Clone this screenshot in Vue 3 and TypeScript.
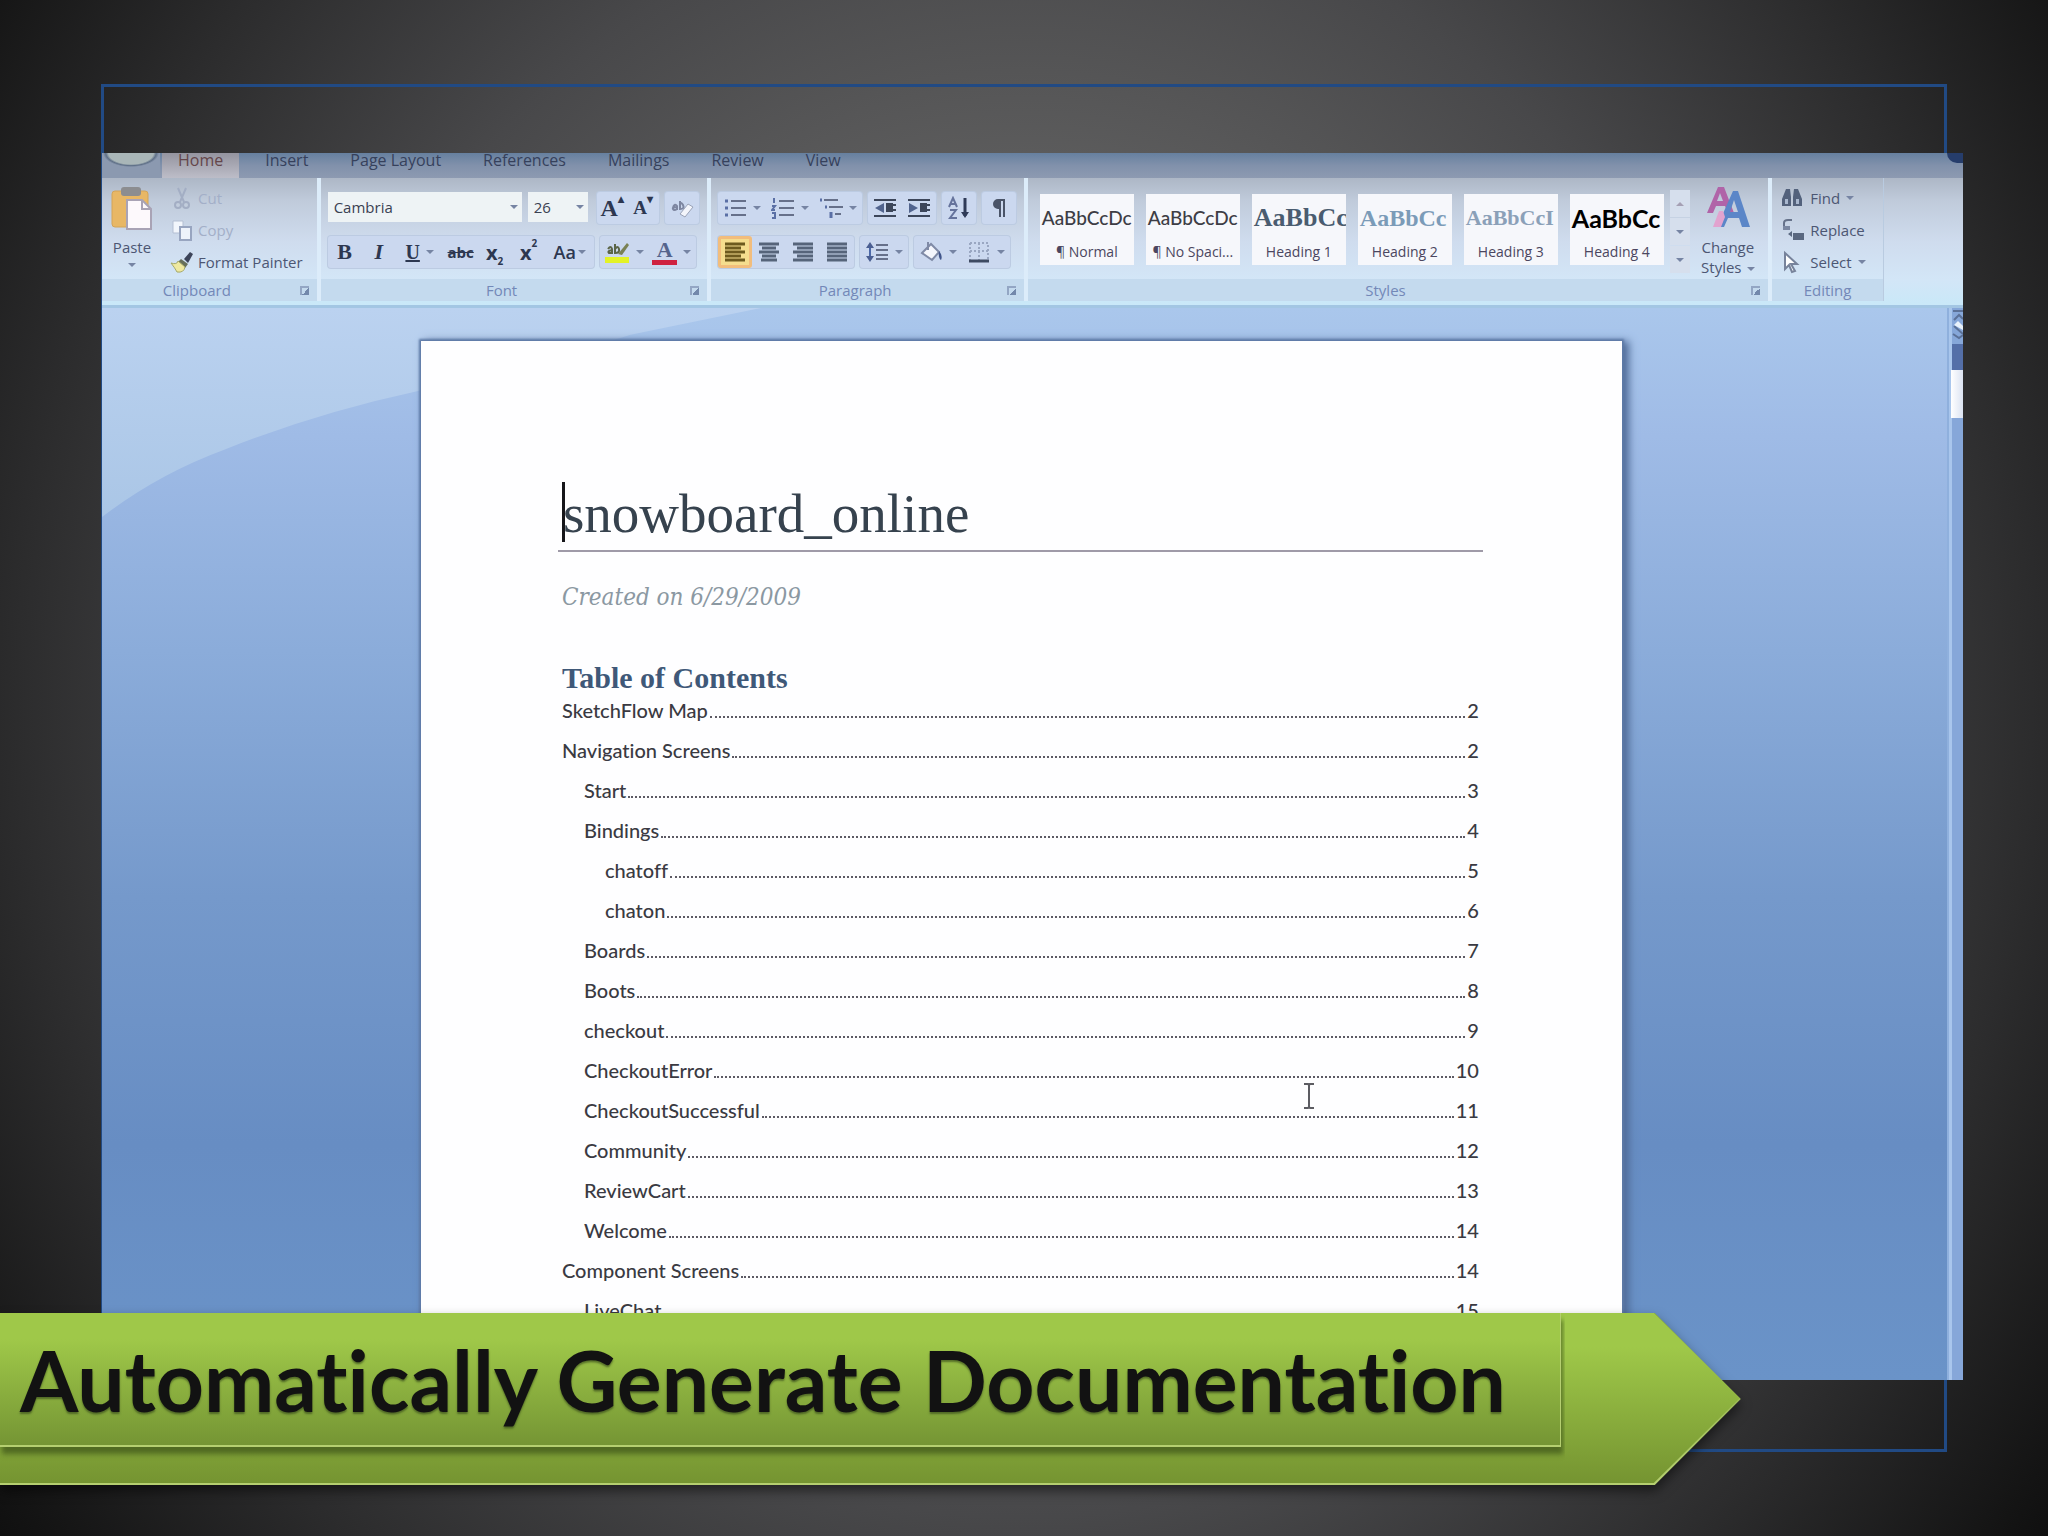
<script setup lang="ts">
interface TocEntry {
  title: string
  page: number
  level: 0 | 1 | 2
}

interface StyleTile {
  sample: string
  name: string
  look: string
}

interface Tool {
  label: string
  icon?: string
  glyph?: string
  look?: string
  menu?: boolean
  wide?: boolean
  active?: boolean
}

const tabs: string[] = ['Home', 'Insert', 'Page Layout', 'References', 'Mailings', 'Review', 'View']

const toc: TocEntry[] = [
  { title: 'SketchFlow Map', page: 2, level: 0 },
  { title: 'Navigation Screens', page: 2, level: 0 },
  { title: 'Start', page: 3, level: 1 },
  { title: 'Bindings', page: 4, level: 1 },
  { title: 'chatoff', page: 5, level: 2 },
  { title: 'chaton', page: 6, level: 2 },
  { title: 'Boards', page: 7, level: 1 },
  { title: 'Boots', page: 8, level: 1 },
  { title: 'checkout', page: 9, level: 1 },
  { title: 'CheckoutError', page: 10, level: 1 },
  { title: 'CheckoutSuccessful', page: 11, level: 1 },
  { title: 'Community', page: 12, level: 1 },
  { title: 'ReviewCart', page: 13, level: 1 },
  { title: 'Welcome', page: 14, level: 1 },
  { title: 'Component Screens', page: 14, level: 0 },
  { title: 'LiveChat', page: 15, level: 1 },
]

const tiles: StyleTile[] = [
  { sample: 'AaBbCcDc', name: '¶ Normal', look: 'plain' },
  { sample: 'AaBbCcDc', name: '¶ No Spaci...', look: 'plain' },
  { sample: 'AaBbCc', name: 'Heading 1', look: 'h-one' },
  { sample: 'AaBbCc', name: 'Heading 2', look: 'h-two' },
  { sample: 'AaBbCcI', name: 'Heading 3', look: 'h-three' },
  { sample: 'AaBbCc', name: 'Heading 4', look: 'h-four' },
]

const icons: Record<string, string> = {
  eraser:
    '<path d="M3 11q2-4 4-1v4M7 11q-5 0-4 2t4 0M10 5v8q5 0 3-4t-3 0" stroke="#7d86a0" stroke-width="2" fill="none"/><path d="M10 18l8-10 5 3-8 10z" fill="#f3f5fb" stroke="#9aa3b8"/>',
  bullets:
    '<path d="M8 5h15M8 12h15M8 19h15" stroke="#66708a" stroke-width="2"/><path d="M2 5h3M2 12h3M2 19h3" stroke="#5a6fa5" stroke-width="3"/>',
  numbers:
    '<path d="M8 5h15M8 12h15M8 19h15" stroke="#66708a" stroke-width="2"/><path d="M3 2v5M1 10h3l-3 4h3M1 17h3v5H1" stroke="#5a6fa5" stroke-width="2" fill="none"/>',
  multilevel:
    '<path d="M5 4h14M10 11h14M16 18h6" stroke="#66708a" stroke-width="2"/><path d="M1 4h2M6 11h2M12 16v6" stroke="#5a6fa5" stroke-width="3"/>',
  outdent:
    '<path d="M1 4h22M13 9h10M13 14h10M1 20h22" stroke="#3c465a" stroke-width="2"/><path d="M11 7v10l-9-5z" fill="#51648e"/><path d="M13 7h7v9h-7z" fill="#3c465a"/>',
  indent:
    '<path d="M1 4h22M13 9h10M13 14h10M1 20h22" stroke="#3c465a" stroke-width="2"/><path d="M2 7v10l9-5z" fill="#51648e"/><path d="M13 7h7v9h-7z" fill="#3c465a"/>',
  sort:
    '<path d="M2 11l4-9 4 9M3 8h6M3 14h6l-6 8h7" stroke="#65739c" stroke-width="2" fill="none"/><path d="M18 2v18" stroke="#2f3b58" stroke-width="3"/><path d="M14 16h8l-4 6z" fill="#2f3b58"/>',
  pilcrow: '<path d="M18 3H11a5 5 0 0 0 0 10h1v8h2V5h2v16h2z" fill="#4a5468"/>',
  left: '<path d="M2 4h20M2 8h16M2 12h20M2 16h16M2 20h20" stroke="#6d5a1e" stroke-width="3"/>',
  center: '<path d="M2 4h20M5 8h14M2 12h20M5 16h14M4 20h16" stroke="#56647a" stroke-width="3"/>',
  right: '<path d="M2 4h20M6 8h16M2 12h20M6 16h16M2 20h20" stroke="#56647a" stroke-width="3"/>',
  justify: '<path d="M2 4h20M2 8h20M2 12h20M2 16h20M2 20h20" stroke="#56647a" stroke-width="3"/>',
  spacing:
    '<path d="M11 5h12M11 10h12M11 15h12M11 19h12" stroke="#66708a" stroke-width="2"/><path d="M5 6v12" stroke="#4b68a8" stroke-width="2"/><path d="M1 8l4-6 4 6zM1 16l4 6 4-6z" fill="#4b5f92"/>',
  bucket:
    '<path d="M3 13l9-9 8 8-7 8z" fill="#f4f6fc" stroke="#7f8aa6" stroke-width="2"/><path d="M9 2v8" stroke="#7f8aa6" stroke-width="2"/><path d="M20 11q4 5 2 9-3-2-2-9z" fill="#41558a"/>',
  borders:
    '<path d="M3 3h18v17M3 3v17M12 3v17M3 11h18" stroke="#9aa7c2" stroke-width="2" stroke-dasharray="2 2" fill="none"/><path d="M2 21h20" stroke="#3e4a62" stroke-width="3"/>',
  highlight:
    '<path d="M3 9q3-4 4 0v4H4q-2-2 3-3M10 4v9q5 0 4-4t-4 0" stroke="#5b6548" stroke-width="2" fill="none"/><path d="M13 14l9-11 2 2-7 10z" fill="#7a8154"/><path d="M0 17h24v6H0z" fill="#e3f227"/>',
  cut: '<path d="M8 2l6 14M16 2l-6 14" stroke="#a3aec4" stroke-width="2"/><circle cx="8" cy="19" r="3" fill="none" stroke="#a3aec4" stroke-width="2"/><circle cx="16" cy="19" r="3" fill="none" stroke="#a3aec4" stroke-width="2"/>',
  copy: '<path d="M3 3h10v12H3z" fill="#f2f6fc" stroke="#b4bfd3"/><path d="M10 9h11v13H10z" fill="#eef3fb" stroke="#98a5c0" stroke-width="2"/>',
  brush:
    '<path d="M14 9l6-7 3 2-5 9z" fill="#3c4459"/><path d="M11 9l7 5-3 4-8-5z" fill="#67705a"/><path d="M1 13q6 2 7-2l7 6q-1 6-8 5-2-4-6-9z" fill="#efe9a0" stroke="#a5a96a"/>',
  find: '<path d="M6 3h4l1 8v9H2v-7zM14 3h4l4 10v7h-9v-9z" fill="#53627c"/><path d="M5 13h3v5H5zM16 13h3v5h-3z" fill="#a9b8cf"/>',
  replace:
    '<path d="M4 12V5q0-3 4-3h4" stroke="#66728a" stroke-width="2" fill="none"/><path d="M3 8h7v4H3z" fill="#7b88a2"/><path d="M8 16l4-3v6zM13 15h11v7H13z" fill="#5a6880"/>',
  select: '<path d="M5 3l12 11h-6l4 7-3 1-3-7-4 4z" fill="#fff" stroke="#77839b" stroke-width="2"/>',
}

const fontTools: Tool[] = [
  { label: 'Bold', glyph: 'B', look: 'bold' },
  { label: 'Italic', glyph: 'I', look: 'italic' },
  { label: 'Underline', glyph: 'U', look: 'under', menu: true, wide: true },
  { label: 'Strikethrough', glyph: 'abc', look: 'strike' },
]

const listTools: Tool[] = [
  { label: 'Bullets', icon: 'bullets', menu: true, wide: true },
  { label: 'Numbering', icon: 'numbers', menu: true, wide: true },
  { label: 'Multilevel list', icon: 'multilevel', menu: true, wide: true },
]
const alignTools: Tool[] = [
  { label: 'Align left', icon: 'left', active: true },
  { label: 'Center', icon: 'center' },
  { label: 'Align right', icon: 'right' },
  { label: 'Justify', icon: 'justify' },
]
const shadeTools: Tool[] = [
  { label: 'Shading', icon: 'bucket', menu: true, wide: true },
  { label: 'Borders', icon: 'borders', menu: true, wide: true },
]
</script>

<template>
  <main class="slide">
    <div class="frame" aria-hidden="true"></div>

    <section class="photo" aria-label="Word processor">
      <nav class="tabs">
        <span class="orb" aria-hidden="true"></span>
        <a v-for="(tab, i) in tabs" :key="tab" href="#" :class="['tab', { current: i === 0 }]">{{ tab }}</a>
        <span class="help" aria-hidden="true"></span>
      </nav>

      <div class="ribbon">
        <section class="group clipboard">
          <div class="body">
            <button class="big">
              <svg width="44" height="46" viewBox="0 0 44 46" aria-hidden="true">
                <rect x="2" y="6" width="36" height="36" rx="3" fill="#e8b765" stroke="#d3a458" />
                <rect x="11" y="2" width="20" height="9" rx="3" fill="#8c8d90" />
                <path d="M17 15h15l9 9v20H17z" fill="#fdf9fc" stroke="#a9a3b5" stroke-width="2" />
                <path d="M32 15v9h9" fill="none" stroke="#a9a3b5" stroke-width="2" />
              </svg>
              <span>Paste</span>
              <i class="arrow"></i>
            </button>
            <div class="stack">
              <button class="line faded"><svg class="ico" viewBox="0 0 24 24" v-html="icons.cut" />Cut</button>
              <button class="line faded"><svg class="ico" viewBox="0 0 24 24" v-html="icons.copy" />Copy</button>
              <button class="line"><svg class="ico" viewBox="0 0 24 24" v-html="icons.brush" />Format Painter</button>
            </div>
          </div>
          <footer class="caption"><span>Clipboard</span><i class="launch"></i></footer>
        </section>

        <section class="group font">
          <div class="body rows">
            <div class="row">
              <label class="field name">
                <select aria-label="Font"><option>Cambria</option></select><i class="arrow"></i>
              </label>
              <label class="field size">
                <select aria-label="Font size"><option>26</option></select><i class="arrow"></i>
              </label>
              <div class="set push">
                <button class="tool short serif-a" aria-label="Grow font">A<sup>▴</sup></button>
                <button class="tool short serif-a less" aria-label="Shrink font">A<sup>▾</sup></button>
              </div>
              <div class="set">
                <button class="tool" aria-label="Clear formatting"><svg class="ico" viewBox="0 0 24 24" v-html="icons.eraser" /></button>
              </div>
            </div>
            <div class="row">
              <div class="set">
                <button v-for="t in fontTools" :key="t.label" :aria-label="t.label" :class="['tool', { wide: t.wide }]">
                  <span :class="t.look">{{ t.glyph }}</span><i v-if="t.menu" class="arrow"></i>
                </button>
                <button class="tool script" aria-label="Subscript">x<sub>2</sub></button>
                <button class="tool script" aria-label="Superscript">x<sup>2</sup></button>
                <button class="tool wide case" aria-label="Change case">Aa<i class="arrow"></i></button>
              </div>
              <div class="set">
                <button class="tool wide" aria-label="Highlight">
                  <svg class="ico mark" viewBox="0 0 24 24" v-html="icons.highlight" /><i class="arrow"></i>
                </button>
                <button class="tool wide" aria-label="Font color"><span class="ink">A</span><i class="arrow"></i></button>
              </div>
            </div>
          </div>
          <footer class="caption"><span>Font</span><i class="launch"></i></footer>
        </section>

        <section class="group para">
          <div class="body rows">
            <div class="row">
              <div class="set">
                <button v-for="t in listTools" :key="t.label" class="tool wide" :aria-label="t.label">
                  <svg class="ico" viewBox="0 0 24 24" v-html="icons[t.icon!]" /><i class="arrow"></i>
                </button>
              </div>
              <div class="set">
                <button class="tool" aria-label="Decrease indent"><svg class="ico" viewBox="0 0 24 24" v-html="icons.outdent" /></button>
                <button class="tool" aria-label="Increase indent"><svg class="ico" viewBox="0 0 24 24" v-html="icons.indent" /></button>
              </div>
              <div class="set">
                <button class="tool" aria-label="Sort"><svg class="ico" viewBox="0 0 24 24" v-html="icons.sort" /></button>
              </div>
              <div class="set">
                <button class="tool" aria-label="Show marks"><svg class="ico" viewBox="0 0 24 24" v-html="icons.pilcrow" /></button>
              </div>
            </div>
            <div class="row">
              <div class="set">
                <button v-for="t in alignTools" :key="t.label" :class="['tool', { active: t.active }]" :aria-label="t.label">
                  <svg class="ico" viewBox="0 0 24 24" v-html="icons[t.icon!]" />
                </button>
              </div>
              <div class="set">
                <button class="tool wide" aria-label="Line spacing">
                  <svg class="ico" viewBox="0 0 24 24" v-html="icons.spacing" /><i class="arrow"></i>
                </button>
              </div>
              <div class="set">
                <button v-for="t in shadeTools" :key="t.label" class="tool wide" :aria-label="t.label">
                  <svg class="ico" viewBox="0 0 24 24" v-html="icons[t.icon!]" /><i class="arrow"></i>
                </button>
              </div>
            </div>
          </div>
          <footer class="caption"><span>Paragraph</span><i class="launch"></i></footer>
        </section>

        <section class="group styles">
          <div class="body">
            <div class="gallery">
              <button v-for="tile in tiles" :key="tile.name" class="tile">
                <span :class="['sample', tile.look]">{{ tile.sample }}</span>
                <span class="tile-name">{{ tile.name }}</span>
              </button>
            </div>
            <div class="scroller">
              <button aria-label="Scroll up"><i class="arrow up"></i></button>
              <button aria-label="Scroll down"><i class="arrow"></i></button>
              <button aria-label="More styles"><i class="arrow"></i></button>
            </div>
            <button class="big change">
              <svg width="46" height="44" viewBox="0 0 46 44" aria-hidden="true">
                <path d="M2 28L13 2h6l10 26h-6l-3-7h-9l-3 7zM12 16h6l-3-8z" fill="#b064a8" />
                <path d="M12 42l16-36h5l12 36h-8l-3-9H23l-4 9zM25 27h8l-4-12z" fill="#5b86c8" />
                <path d="M8 42l6-16h4l2 6-4 10z" fill="#e2a3cf" />
              </svg>
              <span>Change</span>
              <span>Styles<i class="arrow"></i></span>
            </button>
          </div>
          <footer class="caption"><span>Styles</span><i class="launch"></i></footer>
        </section>

        <section class="group editing">
          <div class="body">
            <div class="stack">
              <button class="line"><svg class="ico" viewBox="0 0 24 24" v-html="icons.find" />Find<i class="arrow"></i></button>
              <button class="line"><svg class="ico" viewBox="0 0 24 24" v-html="icons.replace" />Replace</button>
              <button class="line"><svg class="ico" viewBox="0 0 24 24" v-html="icons.select" />Select<i class="arrow"></i></button>
            </div>
          </div>
          <footer class="caption"><span>Editing</span></footer>
        </section>
      </div>

      <div class="desk">
        <svg class="sweep" viewBox="0 0 1000 1000" preserveAspectRatio="none" aria-hidden="true">
          <defs>
            <linearGradient id="sweep-fill" x1="0" y1="0" x2="0" y2="1">
              <stop offset="0" stop-color="#bbd2f0" />
              <stop offset="1" stop-color="#aac6e6" />
            </linearGradient>
          </defs>
          <path d="M0 0H354L284 25Q225 58 171 77Q115 98 66 132Q30 155 0 195z" fill="url(#sweep-fill)" />
        </svg>

        <article class="page">
          <h1><i class="caret" aria-hidden="true"></i>snowboard_online</h1>
          <p class="created">Created on 6/29/2009</p>
          <h2>Table of Contents</h2>
          <ul class="toc">
            <li v-for="entry in toc" :key="entry.title">
              <a href="#" :class="['entry', 'level-' + entry.level]">
                <span>{{ entry.title }}</span>
                <span class="leader"></span>
                <span>{{ entry.page }}</span>
              </a>
            </li>
          </ul>
          <svg class="ibeam" width="12" height="26" viewBox="0 0 12 26" aria-hidden="true">
            <path d="M1 1h4l1 1 1-1h4M6 2v22M1 25h4l1-1 1 1h4" fill="none" stroke="#5c5c62" stroke-width="2" />
          </svg>
        </article>

        <aside class="scrollbar" aria-hidden="true">
          <svg width="12" height="36" viewBox="0 0 12 36">
            <path d="M2 3h10M3 12l5-5 4 4M3 18l9 8M2 26l6 4 4-3" stroke="#5b7198" stroke-width="2" fill="none" />
            <path d="M3 17l4-4 5 5v4z" fill="#e9f2fb" />
          </svg>
          <span class="step"></span>
          <span class="thumb"></span>
        </aside>
      </div>
    </section>

    <div class="banner">
      <div class="edge"><div class="fill"></div></div>
      <h2 class="headline">Automatically Generate Documentation</h2>
    </div>
  </main>
</template>

<style>
body {
  margin: 0;
  background: #050505;
}
</style>

<style scoped>
.slide {
  position: relative;
  box-sizing: border-box;
  min-height: 100vh;
  padding: 153px 85px 156px 102px;
  overflow: hidden;
  background: radial-gradient(ellipse 60% 88% at 50% 46%, #737373 0%, #646464 32%, #48484a 60%, #2c2c2d 82%, #141414 100%, #030303 114%);
  font-family: 'Open Sans', 'Noto Sans', sans-serif;
}

.frame {
  position: absolute;
  inset: 84px 101px 84px 101px;
  border: 3px solid #214a84;
}

.photo {
  position: relative;
  display: flex;
  flex-direction: column;
  height: calc(100vh - 309px);
  overflow: hidden;
  background: #7a9fd2;
}

button {
  margin: 0;
  padding: 0;
  border: 0;
  background: none;
  color: #4c5673;
  font: inherit;
}

/* Tab strip */
.tabs {
  display: flex;
  gap: 42px;
  height: 25px;
  background: linear-gradient(#66809f, #8191ab 50%, #8d9ab1);
}

.orb {
  width: 58px;
  margin-right: -24px;
  background: radial-gradient(ellipse 28px 14px at 50% 0, #a9b6b8 80%, #5f7088 90%, #8b99b0 100%);
}

.tab {
  height: 25px;
  color: #36415c;
  font-size: 16px;
  line-height: 14px;
  text-decoration: none;
}

.tab.current {
  margin: 0 -16px;
  padding: 0 16px;
  background: linear-gradient(#94949f, #bdbdc8);
  color: #64464a;
}

.help {
  width: 16px;
  height: 10px;
  margin-left: auto;
  border-radius: 0 0 0 10px;
  background: #263d6b;
}

/* Ribbon */
.ribbon {
  display: flex;
  box-sizing: border-box;
  height: 130px;
  padding-bottom: 4px;
  border-bottom: 3px solid #a3c6e3;
  background: linear-gradient(#adb7c6, #c0cbdb 18%, #cfdcee 50%, #d3e6f7 80%, #c9e8f8);
  color: #4c5673;
  font-size: 15px;
}

.group {
  display: flex;
  flex-direction: column;
  box-sizing: border-box;
  flex-shrink: 0;
  min-width: 0;
  border-right: 4px solid #dcecfa;
}

.clipboard {
  width: 11.75%;
}

.font {
  width: 21%;
}

.para {
  width: 17%;
}

.styles {
  width: 40%;
}

.editing {
  width: 6%;
  border-right: 1px solid #b9cbe0;
}

.body {
  display: flex;
  flex: 1;
  min-height: 0;
}

.rows {
  flex-direction: column;
  gap: 12px;
  padding: 14px 4px 0 7px;
}

.row {
  display: flex;
  gap: 6px;
  height: 32px;
}

.caption {
  display: flex;
  align-items: center;
  height: 22px;
  padding: 0 8px;
  background: #c4daee;
  color: #7388b8;
  font-size: 15px;
  line-height: 22px;
}

.caption span {
  flex: 1;
  padding-right: 16px;
  text-align: center;
}

.editing .caption span {
  padding-right: 0;
}

.launch {
  width: 7px;
  height: 7px;
  border-top: 2px solid #93a6c4;
  border-left: 2px solid #93a6c4;
  background: linear-gradient(135deg, transparent 50%, #7388ab 50%);
}

.ico {
  flex: none;
  width: 24px;
  height: 24px;
}

.arrow {
  display: inline-block;
  flex: none;
  width: 0;
  height: 0;
  border: 4px solid transparent;
  border-top-color: #7684a3;
  border-bottom: 0;
}

.arrow.up {
  border-top: 0;
  border-bottom: 4px solid #a5a0b4;
}

.big {
  display: flex;
  flex-direction: column;
  align-items: center;
  width: 60px;
  padding-top: 7px;
  line-height: 20px;
}

.big svg {
  margin-bottom: 6px;
}

.big .arrow {
  margin: 6px 0 0 5px;
  vertical-align: middle;
}

.clipboard .arrow {
  margin-left: 0;
}

.stack {
  display: flex;
  flex-direction: column;
  gap: 8px;
  padding: 8px 0 0 8px;
}

.line {
  display: flex;
  align-items: center;
  gap: 4px;
  height: 24px;
  white-space: nowrap;
}

.faded {
  color: #a3afc8;
}

.editing .line {
  gap: 6px;
}

.field {
  display: flex;
  align-items: center;
  box-sizing: border-box;
  height: 30px;
  padding: 0 4px 0 6px;
  background: #eef3f5;
}

.field select {
  flex: 1;
  min-width: 0;
  padding: 0;
  border: 0;
  appearance: none;
  background: none;
  color: #3a4152;
  font: inherit;
}

.name {
  width: 194px;
}

.size {
  width: 60px;
}

.set {
  display: flex;
  box-sizing: border-box;
  height: 32px;
  border-radius: 3px;
  background: #cbd8ef;
  box-shadow: 0 0 0 1px #bccbe2;
}

.tool {
  display: flex;
  align-items: center;
  justify-content: center;
  gap: 6px;
  width: 34px;
  height: 32px;
  color: #2d3750;
}

.tool.wide {
  width: 48px;
}

.tool.short {
  width: 31px;
}

.tool.active {
  box-sizing: border-box;
  border: 3px solid #f2bd7c;
  border-radius: 3px;
  background: #f5dd8e;
}

.push {
  margin-left: 3px;
}

.serif-a {
  gap: 0;
  font: bold 24px 'Liberation Serif', serif;
}

.serif-a.less {
  font-size: 19px;
}

.serif-a sup {
  align-self: flex-start;
  font-size: 12px;
}

.bold {
  font: bold 22px 'Liberation Serif', serif;
}

.italic {
  font: italic bold 22px 'Liberation Serif', serif;
}

.under {
  font: bold 20px 'Liberation Serif', serif;
  text-decoration: underline;
}

.strike {
  font-size: 15px;
  font-weight: 700;
  text-decoration: line-through;
}

.script {
  gap: 0;
  font-size: 20px;
  font-weight: 700;
}

.script sub,
.script sup {
  font-size: 10px;
}

.script sub {
  align-self: flex-end;
}

.script sup {
  align-self: flex-start;
}

.case {
  gap: 2px;
  font-size: 18px;
  font-weight: 600;
}

.mark {
  width: 26px;
}

.ink {
  width: 25px;
  border-bottom: 5px solid #cf2140;
  color: #55648c;
  font: bold 22px/20px 'Liberation Serif', serif;
  text-align: center;
}

/* Quick styles */
.gallery {
  display: flex;
  gap: 12px;
  padding: 16px 0 0 12px;
}

.tile {
  display: flex;
  flex-direction: column;
  align-items: center;
  width: 94px;
  height: 71px;
  overflow: hidden;
  background: #f6f7fb;
  white-space: nowrap;
}

.sample {
  box-sizing: border-box;
  width: 94px;
  height: 44px;
  padding: 0 2px;
  overflow: hidden;
  line-height: 48px;
  text-align: left;
}

.plain {
  color: #3d3d45;
  font-family: Lato, sans-serif;
  font-size: 19px;
  font-weight: 500;
}

.h-one {
  color: #4a5c70;
  font: bold 26px/48px 'Liberation Serif', serif;
}

.h-two {
  color: #7b9bb8;
  font: bold 24px/48px 'Liberation Serif', serif;
}

.h-three {
  color: #8ba0b8;
  font: bold 22px/48px 'Liberation Serif', serif;
}

.h-four {
  color: #000;
  font: bold 25px/48px Lato, sans-serif;
}

.tile-name {
  color: #4b4660;
  font-size: 14px;
  line-height: 27px;
}

.scroller {
  display: flex;
  flex-direction: column;
  gap: 1px;
  width: 20px;
  margin: 12px 0 0 6px;
}

.scroller button {
  height: 27px;
  background: #d6dfed;
}

.scroller .arrow {
  display: block;
  margin: 0 auto;
}

.change {
  width: 76px;
}

.change svg {
  margin-bottom: 8px;
}

.change .arrow {
  margin-top: 0;
}

/* Document area */
.desk {
  position: relative;
  display: flex;
  flex: 1;
  min-height: 0;
  background: linear-gradient(#aac7ec, #9fbbe6 12%, #8bacda 32%, #7599cb 55%, #678dc3 78%, #6a93c8);
}

.sweep {
  position: absolute;
  inset: 0;
  width: 100%;
  height: 100%;
}

.page {
  position: relative;
  box-sizing: border-box;
  flex: none;
  width: 1201px;
  max-width: 65%;
  height: 1200px;
  margin: 33px 0 0 17.14%;
  padding: 143px 143px 0 141px;
  background: #fefeff;
  box-shadow: 0 0 2px 2px #5f7ba8, 5px 2px 8px 2px #506c98;
  color: #3c3c42;
}

h1 {
  position: relative;
  margin: 0 -4px;
  padding: 0 0 6px 5px;
  border-bottom: 2px solid #9f9aa8;
  color: #36424e;
  font: 55px/60px 'Liberation Serif', serif;
}

.caret {
  position: absolute;
  top: -2px;
  left: 4px;
  width: 3px;
  height: 60px;
  background: #16161a;
}

.created {
  margin: 31px 0 0;
  color: #8b98a2;
  font: italic 24px/28px 'DejaVu Serif Condensed', 'DejaVu Serif', serif;
}

.page h2 {
  margin: 55px 0 0;
  color: #3f5878;
  font: bold 30px/24px 'Liberation Serif', serif;
}

.toc {
  margin: 0;
  padding: 0;
  list-style: none;
}

.entry {
  display: flex;
  align-items: baseline;
  color: #3a3a42;
  font: 500 20px/40px Lato, 'Open Sans', sans-serif;
  font-variant-ligatures: none;
  text-decoration: none;
}

.level-1 {
  padding-left: 22px;
}

.level-2 {
  padding-left: 43px;
}

.leader {
  flex: 1;
  margin: 0 2px;
  border-bottom: 2px dotted #5c5a64;
}

.ibeam {
  position: absolute;
  top: 742px;
  left: 73.4%;
}

.scrollbar {
  position: absolute;
  top: 0;
  right: 0;
  bottom: 0;
  display: flex;
  flex-direction: column;
  align-items: flex-end;
  width: 16px;
  background: linear-gradient(90deg, #8fb0dd 2px, #a9c6ec 2px, #a9c6ec 5px, #86a7d9 5px);
}

.step {
  width: 11px;
  height: 26px;
  background: #546fa8;
}

.thumb {
  width: 12px;
  height: 48px;
  background: linear-gradient(90deg, #fff, #dbe3f2);
}

/* Lower-third arrow */
.banner {
  position: absolute;
  bottom: 51px;
  left: 0;
  width: 85%;
  height: 172px;
  filter: drop-shadow(0 6px 6px rgb(0 0 0 / 50%));
}

.edge,
.fill {
  height: 172px;
  clip-path: polygon(0 0, calc(100% - 86px) 0, 100% 50%, calc(100% - 86px) 100%, 0 100%);
}

.edge {
  position: absolute;
  inset: 0;
  background: linear-gradient(#86a83e, #b5cf70);
}

.fill {
  height: 170px;
  margin-right: 1px;
  background: linear-gradient(#9fc849 20%, #759431);
}

.headline {
  position: relative;
  box-sizing: border-box;
  width: calc(100% - 180px);
  height: 134px;
  margin: 0;
  padding-left: 20px;
  border-right: 1px solid #b5cf70;
  border-bottom: 2px solid #b5cf70;
  background: linear-gradient(#9fc849 20%, #759534);
  box-shadow: 2px 7px 5px rgb(50 70 20 / 60%);
  clip-path: inset(0 -4px -14px 0);
  color: #121212;
  font: bold 84px/134px Lato, sans-serif;
  font-variant-ligatures: none;
  text-shadow: 0 2px 2px rgb(60 80 30 / 70%);
  white-space: nowrap;
}
</style>
